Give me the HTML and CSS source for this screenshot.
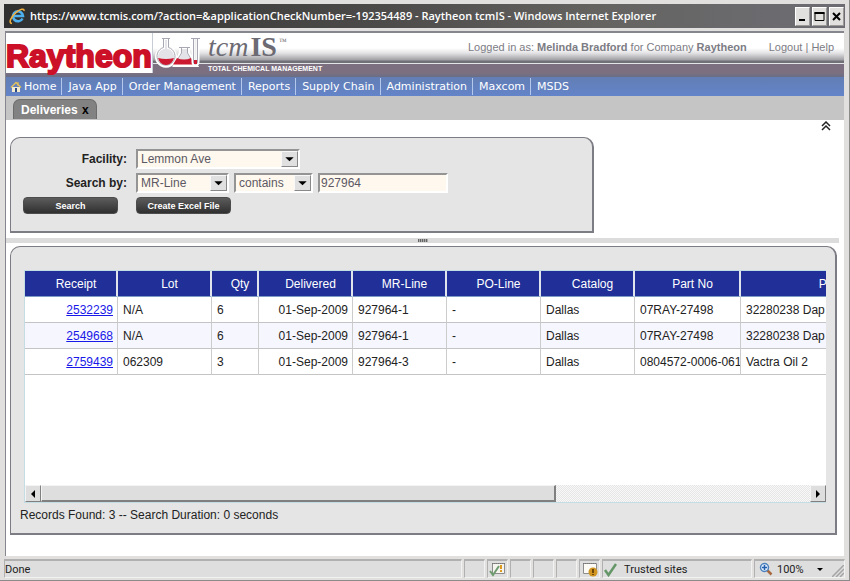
FILE: index.html
```html
<!DOCTYPE html>
<html lang="en">
<head>
<meta charset="utf-8">
<title>Raytheon tcmIS</title>
<link rel="stylesheet" href="styles.css">
</head>
<body>
<div class="window">
  <div class="titlebar">
    <svg class="ie" viewBox="0 0 17 17" width="17" height="17" aria-hidden="true">
      <path d="M13.500 10.500A5 5 0 1 1 14 8H5" fill="none" stroke="#4fb0ee" stroke-width="2.600"/>
      <path d="M3 15.500C-1 15 2 9 7 4.500C11 1 15.500 0 15 3" fill="none" stroke="#f0b040" stroke-width="1.600"/>
    </svg>
    <span class="caption">https://www.tcmis.com/?action=&amp;applicationCheckNumber=-192354489 - Raytheon tcmIS - Windows Internet Explorer</span>
    <div class="winbuttons">
      <button type="button" aria-label="Minimize"><svg viewBox="0 0 13 17" width="13" height="17"><path d="M3 12h6" stroke="#000" stroke-width="2"/></svg></button>
      <button type="button" aria-label="Maximize"><svg viewBox="0 0 13 17" width="13" height="17"><path d="M2 4.500v8h9v-8" fill="none" stroke="#000"/><path d="M1.500 5h10" stroke="#000" stroke-width="2"/></svg></button>
      <button type="button" aria-label="Close"><svg viewBox="0 0 13 17" width="13" height="17"><path d="M3 5l7 7M10 5l-7 7" stroke="#000" stroke-width="2"/></svg></button>
    </div>
  </div>

  <div class="page">
    <header class="masthead">
      <div class="company">Raytheon</div>
      <svg class="flasks" viewBox="0 0 48 40" width="48" height="40" aria-hidden="true">
        <path d="M8.500 5.500h5v9a9.500 9.500 0 1 1-5 0z" fill="#e4e4e8" stroke="#fff" stroke-width="3"/>
        <path d="M7 5.500h8M8.500 6v8.500a9 9 0 1 0 5 0V6" fill="none" stroke="#a8a8b4"/>
        <path d="M3 25q8 2 16 0q-2 7-8 7t-8-7z" fill="#cc1830"/>
        <path d="M25.500 14.500h8v5l8 13h-22l6-13z" fill="#e4e4e8" stroke="#fff" stroke-width="3"/>
        <path d="M24 14.500h11M26.500 15v5l-6 10M32.500 15v5l6 10" fill="none" stroke="#a8a8b4"/>
        <path d="M22 25q7 3 14 0l4 6.500H18z" fill="#cc1830"/>
        <path d="M38 5v24a2.500 2.500 0 0 0 5 0V5" fill="#eee" stroke="#fff" stroke-width="3"/>
        <path d="M36 5.500h9M38.500 6v23a2 2 0 0 0 4 0V6" fill="none" stroke="#a8a8b4"/>
        <path d="M39 27h3v4h-3z" fill="#cc1830"/>
      </svg>
      <div class="product">
        <div class="name"><i>tcm</i><b>IS</b><small>™</small></div>
        <div class="tagline">TOTAL CHEMICAL MANAGEMENT</div>
      </div>
      <p class="user">Logged in as: <b>Melinda Bradford</b> for Company <b>Raytheon</b></p>
      <div class="tools"><a href="#">Logout</a> | <a href="#">Help</a></div>
    </header>

    <nav class="menu">
      <a href="#"><svg viewBox="0 0 12 12" width="12" height="12" aria-hidden="true"><path d="M2 6h8v5H2z" fill="#f4ead0"/><path d="M5 7h2v4H5z" fill="#2c4c88"/><path d="M7 1h2v4H7z" fill="#b8a070"/><path d="M1 6.500L6 1.500l5 5" fill="none" stroke="#e0c060" stroke-width="1.500"/></svg>Home</a>
      <a href="#">Java App</a>
      <a href="#">Order Management</a>
      <a href="#">Reports</a>
      <a href="#">Supply Chain</a>
      <a href="#">Administration</a>
      <a href="#">Maxcom</a>
      <a href="#">MSDS</a>
    </nav>

    <div class="tabs">
      <div class="tab">Deliveries <button type="button" aria-label="Close tab">x</button></div>
    </div>

    <div class="collapse">
      <button type="button" aria-label="Collapse"><svg viewBox="0 0 10 10" width="10" height="10"><path d="M1 5l4-4 4 4M1 9l4-4 4 4" fill="none" stroke="#222" stroke-width="1.500"/></svg></button>
    </div>

    <form class="panel search">
      <label for="facility">Facility:</label>
      <div class="fields">
        <span class="combo facility"><select id="facility"><option>Lemmon Ave</option></select><svg viewBox="0 0 15 15" width="17" height="16" aria-hidden="true"><path d="M3 5.500h9L7.500 10z"/></svg></span>
      </div>
      <label for="field">Search by:</label>
      <div class="fields">
        <span class="combo field"><select id="field"><option>MR-Line</option></select><svg viewBox="0 0 15 15" width="17" height="16" aria-hidden="true"><path d="M3 5.500h9L7.500 10z"/></svg></span>
        <span class="combo mode"><select aria-label="Match"><option>contains</option></select><svg viewBox="0 0 15 15" width="17" height="16" aria-hidden="true"><path d="M3 5.500h9L7.500 10z"/></svg></span>
        <input type="text" value="927964" aria-label="Search text">
      </div>
      <button class="action" type="button">Search</button>
      <button class="action" type="button">Create Excel File</button>
    </form>

    <div class="splitter"><span></span></div>

    <section class="panel results">
      <div class="grid">
        <div class="clip">
          <table>
            <colgroup><col class="w93"><col class="w94"><col class="w47"><col class="w94"><col class="w94"><col class="w94"><col class="w94"><col class="w106"><col class="w232"></colgroup>
            <thead>
              <tr><th>Receipt</th><th>Lot</th><th>Qty</th><th>Delivered</th><th>MR-Line</th><th>PO-Line</th><th>Catalog</th><th>Part No</th><th>Part Description</th></tr>
            </thead>
            <tbody>
              <tr><td class="num"><a href="#">2532239</a></td><td>N/A</td><td>6</td><td class="num">01-Sep-2009</td><td>927964-1</td><td>-</td><td>Dallas</td><td>07RAY-27498</td><td>32280238 Dap</td></tr>
              <tr><td class="num"><a href="#">2549668</a></td><td>N/A</td><td>6</td><td class="num">01-Sep-2009</td><td>927964-1</td><td>-</td><td>Dallas</td><td>07RAY-27498</td><td>32280238 Dap</td></tr>
              <tr><td class="num"><a href="#">2759439</a></td><td>062309</td><td>3</td><td class="num">01-Sep-2009</td><td>927964-3</td><td>-</td><td>Dallas</td><td>0804572-0006-061</td><td>Vactra Oil 2</td></tr>
            </tbody>
          </table>
        </div>
        <div class="scrollbar">
          <button type="button" aria-label="Scroll left"><svg viewBox="0 0 12 12" width="14" height="12"><path d="M8 2v8L4 6z"/></svg></button>
          <div class="track"><div class="thumb"></div></div>
          <button type="button" aria-label="Scroll right"><svg viewBox="0 0 12 12" width="14" height="12"><path d="M4 2v8l4-4z"/></svg></button>
        </div>
      </div>
      <p class="summary">Records Found: 3 -- Search Duration: 0 seconds</p>
    </section>
  </div>

  <footer class="status">
    <div class="cell done">Done</div>
    <div class="cell slot"></div>
    <div class="cell slot"><svg viewBox="0 0 20 16" width="20" height="16" aria-hidden="true"><path d="M4.500 2.500h12v10h-12z" fill="#f6f4ee" stroke="#8c8c8c"/><path d="M4 2.500h13" stroke="#777" stroke-dasharray="1 1"/><path d="M13 4v4M13 9v2" stroke="#e09a20" stroke-width="2"/><path d="M2 10l3 4 6-9" fill="none" stroke="#6e9c70" stroke-width="2"/></svg></div>
    <div class="cell slot"></div>
    <div class="cell slot"></div>
    <div class="cell slot"></div>
    <div class="cell slot"><svg viewBox="0 0 20 16" width="20" height="16" aria-hidden="true"><path d="M3.500 2.500h13v10h-13z" fill="#fbfaf4" stroke="#8c8c8c"/><path d="M3 2.500h14" stroke="#777" stroke-dasharray="1 1"/><circle cx="13" cy="11" r="4.500" fill="#d09420"/><path d="M13 8v4M13 13v1" stroke="#4c2c00" stroke-width="1.500"/></svg></div>
    <div class="cell zone"><svg viewBox="0 0 16 16" width="16" height="16" aria-hidden="true"><path d="M2 9l3.500 5L13 3" fill="none" stroke="#659668" stroke-width="2.500"/></svg>Trusted sites</div>
    <div class="cell zoom"><svg viewBox="0 0 14 14" width="14" height="14" aria-hidden="true"><path d="M8 8l4.500 4.500" stroke="#a86840" stroke-width="2.500"/><circle cx="5.500" cy="5.500" r="4" fill="#e4f0fc" stroke="#4c80bc" stroke-width="1.500"/><path d="M5.500 3v5M3 5.500h5" stroke="#2460b0" stroke-width="1.500"/></svg><span>100%</span><svg viewBox="0 0 7 5" width="7" height="5" aria-hidden="true"><path d="M0 1h6L3 4z"/></svg><svg class="grip" viewBox="0 0 12 12" width="12" height="12" aria-hidden="true"><path d="M0 12L12 0M4 12l8-8M8 12l4-4" stroke="#a4a4a4" stroke-width="1.500"/></svg></div>
  </footer>
</div>
</body>
</html>
```
FILE: styles.css
```css
* { box-sizing: border-box; }

body {
  margin: 0;
  font: 12px/16px "Liberation Sans", Arial, sans-serif;
  color: #222;
}

button { font: inherit; padding: 0; border: 0; background: none; }
svg { display: block; flex: none; }
p { margin: 0; }

.window {
  display: flex;
  flex-direction: column;
  min-height: 100vh;
  padding: 4px 4px 2px;
  background: #e2dfdf;
  border-right: 1px solid #8c8a8a;
  border-bottom: 1px solid #8c8a8a;
}

/* Title bar */
.titlebar {
  display: flex;
  align-items: center;
  height: 24px;
  padding: 0 1px 0 5px;
  background: linear-gradient(90deg, #303030, #4c4b4a 45%, #646360 70%, #6e6d74);
  color: #fff;
}
.ie { margin-right: 4px; }
.caption {
  flex: 1;
  min-width: 0;
  overflow: hidden;
  white-space: nowrap;
  font: 600 11px/16px "Open Sans", "Noto Sans", sans-serif;
}
.winbuttons { display: flex; gap: 2px; }
.winbuttons button {
  width: 15px;
  height: 19px;
  background: #e2e0de;
  border: 1px solid;
  border-color: #fff #9c9a98 #9c9a98 #fff;
}

/* Page area */
.page {
  flex: 1;
  display: flex;
  flex-direction: column;
  margin: 3px 1px 0;
  background: #fff;
  border: solid #86868f;
  border-width: 2px 0 0 1px;
}

.masthead {
  display: flex;
  height: 44px;
  background: linear-gradient(#fff 15px, #e4e4e6 20px, #a0a0a4 27px, #707078 28px, #707078 30px, #e4e4e8 30px, #e4e4e8 31px, #7c7080 31px, #7c7080 40px, #6c6e86 43px);
  color: #7c7c84;
}
.company {
  height: 40px;
  width: 147px;
  padding-top: 5px;
  background: #fff;
  border-right: 1px solid #c8ccd4;
  color: #cc1028;
  font: bold 32px/36px "Liberation Sans", Arial, sans-serif;
  -webkit-text-stroke: 2px #cc1028;
}
.flasks { margin-left: 2px; }
.product { padding-left: 5px; }
.name {
  height: 31px;
  font: 28px/28px "Liberation Serif", "Times New Roman", serif;
  color: #6c6a72;
}
.name i, .name b { margin-right: 2px; }
.name small { font-size: 8px; line-height: 8px; vertical-align: 12px; }
.tagline { font: bold 7px/10px "Liberation Sans", Arial, sans-serif; color: #fff; white-space: nowrap; }
.user { margin-left: auto; padding-top: 6px; font-size: 11px; }
.tools { padding: 6px 10px 0 22px; font-size: 11px; }
.tools a { color: inherit; text-decoration: none; }

.menu {
  display: flex;
  gap: 1px;
  height: 19px;
  padding: 1px 0;
  background: linear-gradient(#627eb4, #6384c9);
}
.menu a {
  display: flex;
  align-items: center;
  gap: 2px;
  padding: 0 5px;
  border-right: 1px solid #b4c8ec;
  color: #fff;
  font: 11px/16px "DejaVu Sans", Verdana, sans-serif;
  text-decoration: none;
}
.menu a:first-child { padding-left: 4px; }
.menu a:last-child { border: 0; }

.tabs {
  display: flex;
  align-items: flex-end;
  height: 24px;
  padding: 0 7px 1px;
  background: #c5c5c5;
}
.tab {
  height: 20px;
  padding: 2px 7px;
  border-radius: 7px 7px 0 0;
  border: 1px solid #6c6c6c;
  border-bottom: 0;
  background: #828282;
  color: #fff;
  font-weight: bold;
}
.tab button { margin-left: 1px; color: #000; }

.collapse { display: flex; justify-content: flex-end; align-items: flex-start; height: 17px; padding: 1px 13px; }

/* Panels */
.panel {
  background: #e5e5e5;
  border: 1px solid #7c7c84;
  border-right-width: 2px;
  border-bottom-width: 2px;
}

.search {
  display: grid;
  grid-template-columns: 104px 1fr;
  grid-template-rows: 24px 24px 18px;
  column-gap: 9px;
  width: 70%;
  max-width: 584px;
  height: 96px;
  margin-left: 4px;
  padding: 11px 12px 0;
  border-radius: 10px 10px 0 0;
}
.search label { text-align: right; font-weight: bold; line-height: 20px; }
.fields { display: flex; gap: 5px; align-items: flex-start; }

.combo { display: grid; height: 20px; }
.combo select, .fields input {
  grid-area: 1 / 1;
  min-width: 0;
  width: 100%;
  height: 20px;
  margin: 0;
  appearance: none;
  border: 2px solid;
  border-color: #949494 #fff #fff #949494;
  border-radius: 0;
  background: #fff8ee;
  color: #5c5864;
  font: 12px/16px "Liberation Sans", Arial, sans-serif;
  padding: 0 3px;
}
.fields input { width: 130px; padding: 0 1px; }
.combo svg {
  grid-area: 1 / 1;
  place-self: center end;
  margin-right: 2px;
  background: #e0e0e0;
  border: 1px solid;
  border-color: #f8f8f8 #888 #888 #f8f8f8;
  pointer-events: none;
}
.facility { width: 164px; }
.field { width: 93px; }
.mode { width: 79px; }

.action {
  justify-self: start;
  width: 95px;
  height: 17px;
  border-radius: 4px;
  background: linear-gradient(#5c5c5c, #303030);
  border: 1px solid #4c4c4c;
  color: #fff;
  font: bold 9px/14px "Liberation Sans", Arial, sans-serif;
}

.splitter { display: flex; justify-content: center; align-items: center; height: 5px; margin: 5px 5px 3px 0; background: #dcdcdc; }
.splitter span { width: 10px; height: 3px; background: repeating-linear-gradient(90deg, #666 0 1px, #aaa 1px 2px); }

.results {
  flex: 1;
  display: flex;
  flex-direction: column;
  margin: 0 7px 21px 4px;
  padding: 23px 9px 10px 13px;
  border-radius: 10px 10px 0 0;
}
.grid {
  flex: 1;
  display: flex;
  flex-direction: column;
  background: #fff;
  border: 1px solid #c4dce4;
  border-right: 0;
}
.clip { flex: 1; overflow: hidden; width: 0; min-width: 100%; }
table { width: 750px; table-layout: fixed; border-collapse: separate; border-spacing: 0; }
.w93 { width: 93px; }
.w94 { width: 94px; }
.w47 { width: 47px; }
.w106 { width: 106px; }
.w232 { width: 232px; }
th {
  height: 26px;
  padding: 0 0 0 11px;
  background: #203098;
  border-right: 2px solid #e0e4ec;
  border-bottom: 1px solid #7c9cc4;
  color: #fff;
  font-weight: normal;
}
td {
  height: 26px;
  padding: 0 0 0 5px;
  border-right: 1px solid #ccc;
  border-bottom: 1px solid #c4c4c4;
  overflow: hidden;
  white-space: nowrap;
}
.num { text-align: right; padding: 0 4px; }
td a { color: #1818e8; }
tr:nth-child(even) td { background: #f6f6fe; }

.scrollbar { display: flex; height: 17px; }
.scrollbar button, .thumb {
  background: #dedede;
  border: 1px solid;
  border-color: #f4f4f4 #808080 #808080 #f4f4f4;
}
.scrollbar button { width: 16px; }
.track {
  flex: 1;
  background: repeating-conic-gradient(#e6e6e6 0 25%, #f8f8f8 0 50%) 0 0 / 2px 2px;
}
.thumb { width: 67%; height: 100%; border-width: 1px 2px 2px 1px; }
.summary { margin: 4px 0 0 -4px; }

/* Status bar */
.status {
  display: flex;
  gap: 2px;
  height: 19px;
  margin-top: 3px;
  font: 11px/17px Roboto, "Noto Sans", sans-serif;
}
.cell { display: flex; align-items: center; background: #dedede; border: 1px solid; border-color: #b0b0b0 #f2f2f2 #f2f2f2 #b0b0b0; border-top-width: 2px; }
.done { flex: 1; }
.slot { width: 21px; }
.zone { width: 150px; gap: 5px; }
.zoom { width: 91px; gap: 4px; padding-left: 4px; }
.zoom span { margin-right: 9px; }
.grip { margin-left: auto; align-self: flex-end; }
```
